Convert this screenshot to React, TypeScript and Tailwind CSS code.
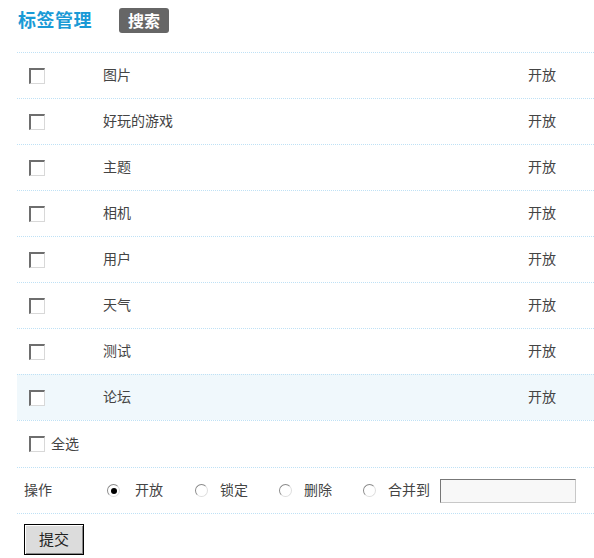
import React from "react";

const rows = ["图片", "好玩的游戏", "主题", "相机", "用户", "天气", "测试", "论坛"];

function Box() {
  return (
    <span className="inline-block w-[16px] h-[16px] bg-white border-t-2 border-l-2 border-r border-b border-t-[#6e6e6e] border-l-[#6e6e6e] border-r-[#d8d8d8] border-b-[#d8d8d8]" />
  );
}

function Radio({ on }: { on?: boolean }) {
  return (
    <span className="inline-flex items-center justify-center w-[13px] h-[13px] rounded-full bg-white border border-t-[#8a8a8a] border-l-[#8a8a8a] border-r-[#dedede] border-b-[#dedede]">
      {on && <span className="w-[6px] h-[6px] rounded-full bg-black" />}
    </span>
  );
}

export default function App() {
  return (
    <div className="w-[594px] h-[558px] bg-white overflow-hidden font-['Noto_Sans_CJK_SC',sans-serif] text-[14px] text-[#444]">
      <div className="h-[52px] flex items-start pt-[8px] pl-[18px]">
        <span className="h-[25px] leading-[22px] text-[18px] font-bold text-[#1a9ad6] tracking-[0.5px]">标签管理</span>
        <span className="ml-[27px] w-[50px] h-[25px] rounded-[3px] bg-[#666] text-white font-bold text-[16px] leading-[24px] text-center">
          搜索
        </span>
      </div>
      <div className="ml-[17px]">
        {rows.map((r, i) => (
          <div
            key={r}
            className={
              "h-[46px] flex items-center border-t border-dotted border-[#bfe1f5] " +
              (i === rows.length - 1 ? "bg-[#f0f8fc]" : "")
            }
          >
            <div className="w-[86px] pl-[12px] flex items-center">
              <Box />
            </div>
            <div className="flex-1 pb-[2px]">{r}</div>
            <div className="w-[66px] pb-[2px]">开放</div>
          </div>
        ))}
        <div className="h-[47px] flex items-center border-t border-dotted border-[#bfe1f5] pl-[12px]">
          <Box />
          <span className="ml-[6px] pb-[2px]">全选</span>
        </div>
        <div className="h-[46px] flex items-center border-t border-dotted border-[#bfe1f5] pl-[7px]">
          <span className="w-[83px] pb-[2px]">操作</span>
          <Radio on />
          <span className="ml-[15px] w-[60px] pb-[2px]">开放</span>
          <Radio />
          <span className="ml-[12px] w-[59px] pb-[2px]">锁定</span>
          <Radio />
          <span className="ml-[12px] w-[59px] pb-[2px]">删除</span>
          <Radio />
          <span className="ml-[12px] pb-[2px]">合并到</span>
          <span className="ml-[10px] w-[136px] h-[24px] bg-[#f8f8f8] border border-t-[#777] border-l-[#777] border-r-[#c8c8c8] border-b-[#c8c8c8]" />
        </div>
        <div className="border-t border-dotted border-[#bfe1f5] pl-[7px] pt-[10px]">
          <button className="w-[60px] h-[31px] bg-[#dcdcdc] border border-black shadow-[inset_1px_1px_0_#fff,inset_-1px_-1px_0_#888] text-[15px] text-[#222]">
            提交
          </button>
        </div>
      </div>
    </div>
  );
}
